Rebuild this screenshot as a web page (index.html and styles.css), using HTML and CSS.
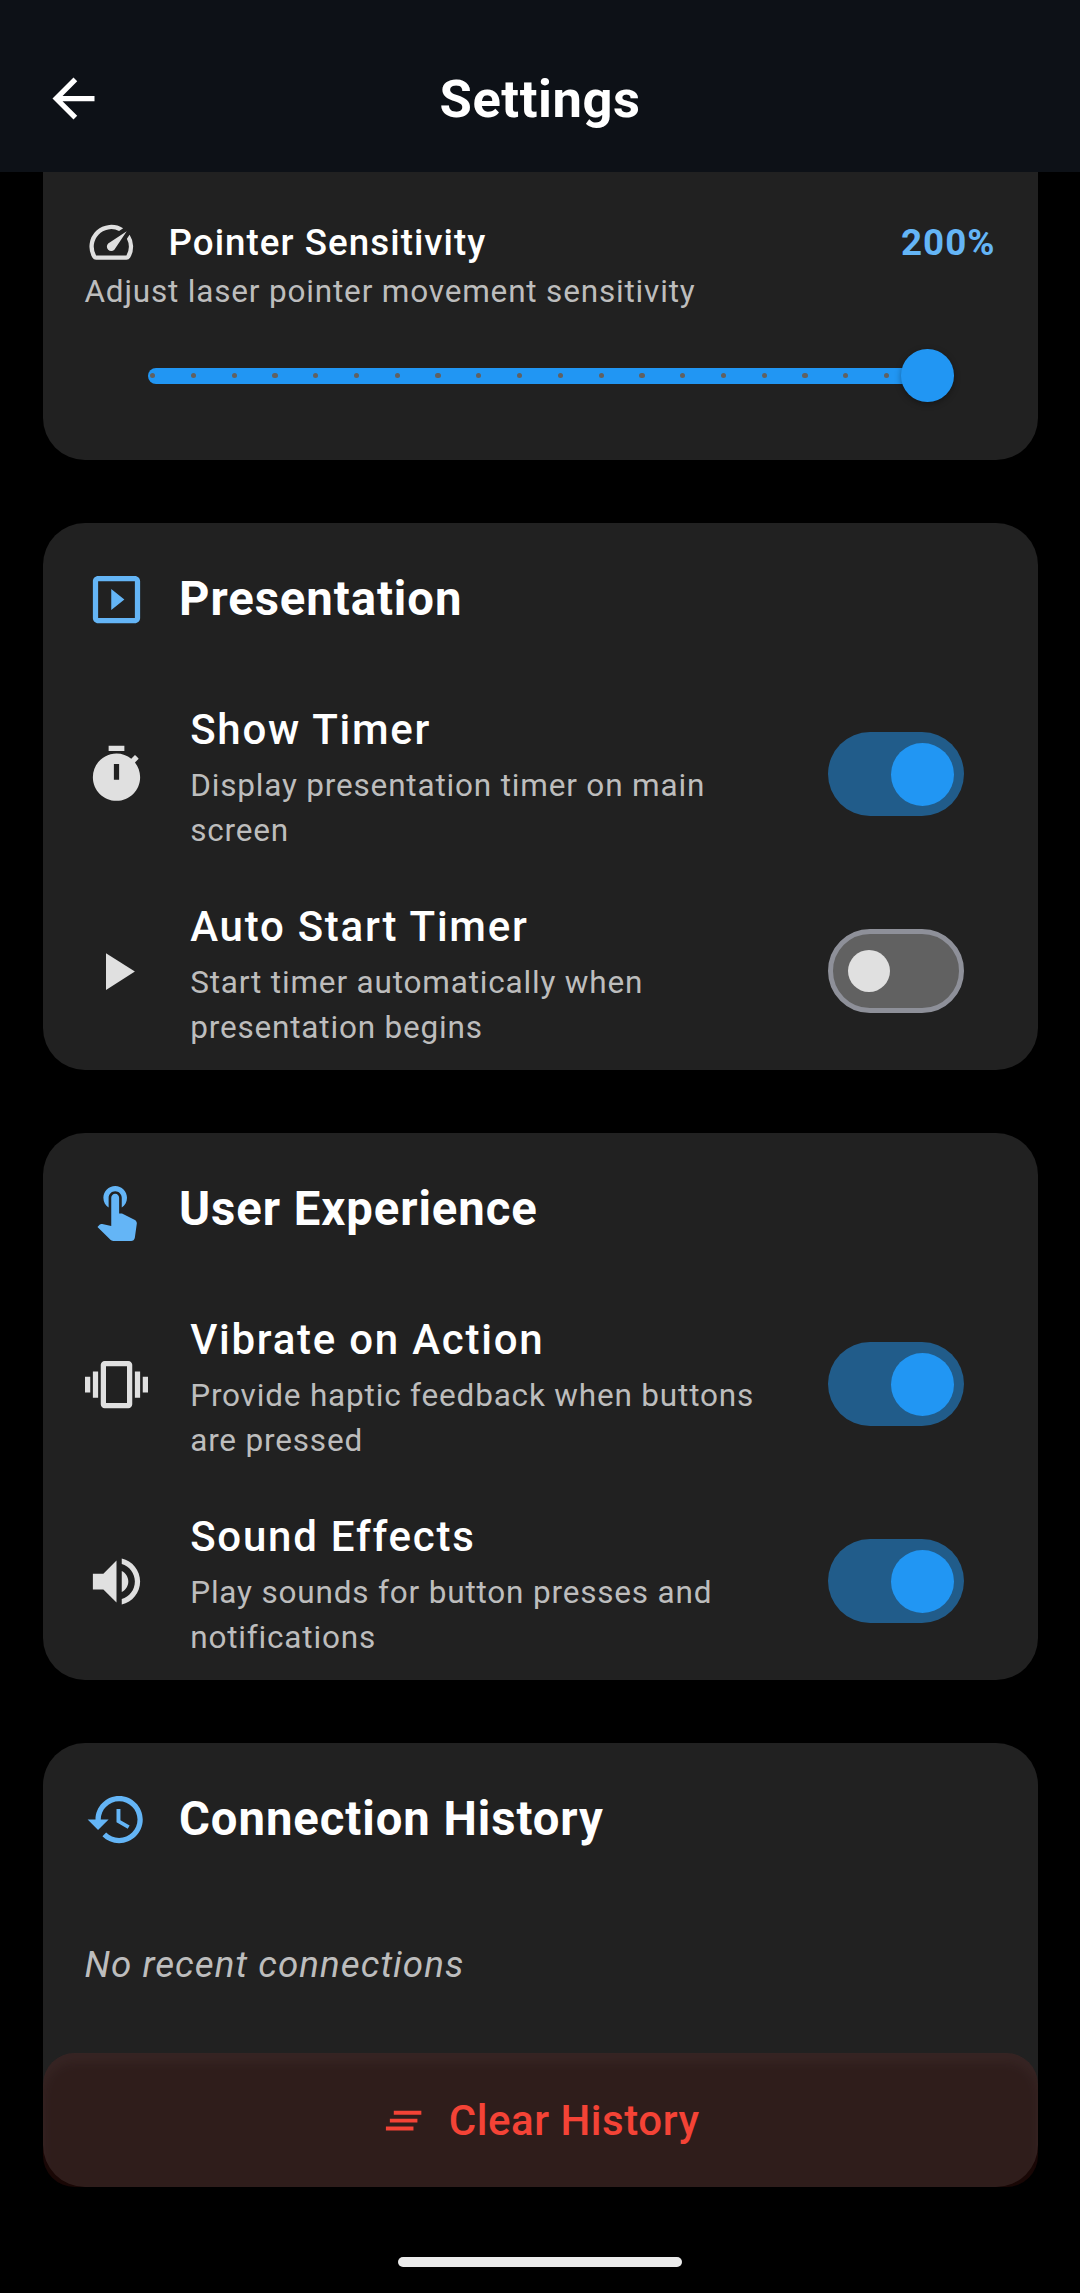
FILE: index.html
```html
<!DOCTYPE html>
<html lang="en">
<head>
<meta charset="utf-8">
<title>Settings</title>
<link rel="stylesheet" href="styles.css">
</head>
<body>
<header class="app-bar">
  <svg class="icon back" viewBox="0 0 24 24"><path d="M20 11H7.83l5.59-5.59L12 4l-8 8 8 8 1.41-1.41L7.83 13H20v-2z"/></svg>
  <h1 class="app-title">Settings</h1>
</header>

<main class="content">
  <section class="card card-pointer">
    <div class="setting-row">
      <svg class="icon icon-small" viewBox="0 0 24 24"><path d="M20.38 8.57l-1.23 1.85a8 8 0 0 1-.22 7.58H5.07A8 8 0 0 1 15.58 6.85l1.85-1.23A10 10 0 0 0 3.35 19a2 2 0 0 0 1.72 1h13.85a2 2 0 0 0 1.74-1 10 10 0 0 0-.27-10.44zm-9.79 6.84a2 2 0 0 0 2.83 0l5.66-8.49-8.49 5.66a2 2 0 0 0 0 2.83z"/></svg>
      <span class="setting-name">Pointer Sensitivity</span>
      <span class="setting-value">200%</span>
    </div>
    <p class="subtitle">Adjust laser pointer movement sensitivity</p>
    <div class="slider">
      <div class="ticks"><i></i><i></i><i></i><i></i><i></i><i></i><i></i><i></i><i></i><i></i><i></i><i></i><i></i><i></i><i></i><i></i><i></i><i></i><i></i><i></i></div>
      <div class="slider-thumb"></div>
    </div>
  </section>

  <section class="card">
    <div class="card-header">
      <svg class="icon accent" viewBox="0 0 24 24"><path d="M10 8v8l5-4-5-4zm9-5H5c-1.1 0-2 .9-2 2v14c0 1.1.9 2 2 2h14c1.1 0 2-.9 2-2V5c0-1.1-.9-2-2-2zm0 16H5V5h14v14z"/></svg>
      <h2>Presentation</h2>
    </div>
    <div class="tile">
      <svg class="icon" viewBox="0 0 24 24"><path d="M15 1H9v2h6V1zm4.03 6.39l1.42-1.42c-.43-.51-.9-.99-1.41-1.41l-1.42 1.42C16.07 4.74 14.12 4 12 4c-4.97 0-9 4.03-9 9s4.02 9 9 9 9-4.03 9-9c0-2.12-.74-4.07-1.97-5.61zM13 14h-2V8h2v6z"/></svg>
      <div class="tile-text">
        <h3>Show Timer</h3>
        <p class="subtitle">Display presentation timer on main screen</p>
      </div>
      <div class="switch on"><span></span></div>
    </div>
    <div class="tile">
      <svg class="icon" viewBox="0 0 24 24"><path d="M8 5v14l11-7z"/></svg>
      <div class="tile-text">
        <h3>Auto Start Timer</h3>
        <p class="subtitle">Start timer automatically when presentation begins</p>
      </div>
      <div class="switch"><span></span></div>
    </div>
  </section>

  <section class="card">
    <div class="card-header">
      <svg class="icon accent" viewBox="0 0 24 24"><path d="M9 11.24V7.5C9 6.12 10.12 5 11.5 5S14 6.12 14 7.5v3.74c1.21-.81 2-2.18 2-3.74C16 5.01 13.99 3 11.5 3S7 5.01 7 7.5c0 1.56.79 2.93 2 3.74zm9.84 4.63l-4.54-2.26c-.17-.07-.35-.11-.54-.11H13v-6c0-.83-.67-1.5-1.5-1.5S10 6.67 10 7.5v10.74l-3.43-.72c-.08-.01-.15-.03-.24-.03-.31 0-.59.13-.79.33l-.79.8 4.94 4.94c.27.27.65.44 1.06.44h6.79c.75 0 1.33-.55 1.44-1.28l.75-5.27c.01-.07.02-.14.02-.2 0-.62-.38-1.16-.91-1.38z"/></svg>
      <h2>User Experience</h2>
    </div>
    <div class="tile">
      <svg class="icon" viewBox="0 0 24 24"><path d="M0 15h2V9H0v6zm3 2h2V7H3v10zm19-8v6h2V9h-2zm-3 8h2V7h-2v10zM16.5 3h-9C6.67 3 6 3.67 6 4.5v15c0 .83.67 1.5 1.5 1.5h9c.83 0 1.5-.67 1.5-1.5v-15c0-.83-.67-1.5-1.5-1.5zM16 19H8V5h8v14z"/></svg>
      <div class="tile-text">
        <h3>Vibrate on Action</h3>
        <p class="subtitle">Provide haptic feedback when buttons are pressed</p>
      </div>
      <div class="switch on"><span></span></div>
    </div>
    <div class="tile">
      <svg class="icon" viewBox="0 0 24 24"><path d="M3 9v6h4l5 5V4L7 9H3zm13.5 3c0-1.77-1.02-3.29-2.5-4.03v8.05c1.48-.73 2.5-2.25 2.5-4.02zM14 3.23v2.06c2.89.86 5 3.54 5 6.71s-2.11 5.85-5 6.71v2.06c4.01-.91 7-4.49 7-8.77s-2.99-7.86-7-8.77z"/></svg>
      <div class="tile-text">
        <h3>Sound Effects</h3>
        <p class="subtitle">Play sounds for button presses and notifications</p>
      </div>
      <div class="switch on"><span></span></div>
    </div>
  </section>

  <section class="card card-history">
    <div class="card-header">
      <svg class="icon accent" viewBox="0 0 24 24"><path d="M13 3c-4.97 0-9 4.03-9 9H1l3.89 3.89.07.14L9 12H6c0-3.87 3.13-7 7-7s7 3.13 7 7-3.13 7-7 7c-1.93 0-3.68-.79-4.94-2.06l-1.42 1.42C8.27 19.99 10.51 21 13 21c4.97 0 9-4.03 9-9s-4.03-9-9-9zm-1 5v5l4.28 2.54.72-1.21-3.5-2.08V8H12z"/></svg>
      <h2>Connection History</h2>
    </div>
    <p class="empty">No recent connections</p>
    <button class="clear-button" type="button">
      <svg class="clear-icon" viewBox="0 0 24 24"><path d="M5 13h14v-2H5v2zm-2 4h14v-2H3v2zM7 7v2h14V7H7z"/></svg>
      <span>Clear History</span>
    </button>
  </section>
</main>

<div class="nav-bar"><div class="nav-pill"></div></div>
</body>
</html>
```
FILE: styles.css
```css
* { box-sizing: border-box; }

body {
  margin: 0;
  width: 1080px;
  height: 2293px;
  display: flex;
  flex-direction: column;
  overflow: hidden;
  background: #000;
  color: #fff;
  font-family: Roboto, "Liberation Sans", sans-serif;
  letter-spacing: 0.82px;
}

h1, h2, h3, p { margin: 0; }

.icon {
  width: 63px;
  height: 63px;
  flex: none;
  fill: #e0e0e0;
}
.icon-small { width: 52.5px; height: 52.5px; }
.accent { fill: #64b5f6; }

.app-bar {
  flex: none;
  height: 172px;
  padding: 24px 42px 0;
  display: grid;
  grid-template-columns: 63px 1fr 63px;
  align-items: center;
  background: #0d1117;
}
.back { fill: #fff; }
.app-title {
  padding-top: 1px;
  font-size: 52.5px;
  font-weight: 700;
  line-height: 68px;
  letter-spacing: 0.55px;
  text-align: center;
}

.content {
  display: flex;
  flex-direction: column;
  gap: 63.4px;
  padding: 0 42.5px;
}

.card {
  padding-top: 42px;
  border-radius: 42px;
  background: #212121;
}

.card-pointer {
  height: 287.6px;
  padding: 44px 42px 0;
  border-radius: 0 0 42px 42px;
}
.setting-row {
  display: flex;
  align-items: center;
  height: 52.5px;
  font-size: 36.75px;
  letter-spacing: 1.04px;
}
.setting-name { margin-left: 31.5px; font-weight: 500; }
.setting-value { margin-left: auto; font-weight: 700; color: #64b5f6; }

.subtitle {
  font-size: 31.5px;
  line-height: 45px;
  color: #bdbdbd;
}

.slider {
  position: relative;
  width: 785px;
  height: 15.75px;
  margin: 54.3px 63px 0;
  padding: 0 2.6px;
  border-radius: 8px;
  background: #2196f3;
}
.ticks {
  display: flex;
  justify-content: space-between;
  align-items: center;
  height: 100%;
}
.ticks i {
  width: 5.25px;
  height: 5.25px;
  border-radius: 50%;
  background: #616161;
}
.slider-thumb {
  position: absolute;
  right: -21px;
  top: -18.4px;
  width: 52.5px;
  height: 52.5px;
  border-radius: 50%;
  background: #2196f3;
  box-shadow: 0 2px 6px rgba(0, 0, 0, 0.35);
}

.card-header {
  display: flex;
  align-items: center;
  gap: 31.5px;
  height: 68.6px;
  margin: 0 42px 42px;
}
.card-header h2 {
  font-size: 47.25px;
  line-height: 67px;
  font-weight: 700;
  letter-spacing: 0.94px;
}

.tile {
  display: flex;
  align-items: center;
  height: 197px;
  padding: 0 73.5px 0 42px;
}
.tile-text {
  flex: 1;
  align-self: flex-start;
  padding-top: 22px;
  margin: 0 36px 0 42.7px;
}
.tile-text h3 {
  font-size: 42px;
  line-height: 63px;
  font-weight: 500;
  letter-spacing: 1.75px;
  margin-bottom: 2px;
}

.switch {
  display: flex;
  align-items: center;
  flex: none;
  width: 136.5px;
  height: 84px;
  padding-left: 15.75px;
  border: 5.25px solid #8e9099;
  border-radius: 42px;
  background: #616161;
}
.switch span {
  width: 42px;
  height: 42px;
  border-radius: 50%;
  background: #e0e0e0;
}
.switch.on {
  justify-content: flex-end;
  padding: 0 10.5px 0 0;
  border: 0;
  background: #215c8a;
}
.switch.on span { width: 63px; height: 63px; background: #2196f3; }

.empty {
  margin: 0 42px;
  padding-top: 43.5px;
  font-size: 36.75px;
  line-height: 52.5px;
  font-style: italic;
  letter-spacing: 1.04px;
  color: #bdbdbd;
}
.card-history { height: 444.5px; }

.clear-button {
  position: relative;
  display: flex;
  align-items: center;
  justify-content: center;
  gap: 21px;
  width: 100%;
  height: 134.5px;
  margin-top: 61.4px;
  padding: 0;
  border: 0;
  border-radius: 31.5px;
  overflow: hidden;
  background: rgba(244, 67, 54, 0.1);
  color: #f44336;
  font-family: inherit;
  font-size: 42px;
  font-weight: 500;
  letter-spacing: 0.54px;
}
/* Soft elevation shade showing through the translucent button. */
.clear-button::before {
  content: "";
  position: absolute;
  inset: 10px 1px -24px;
  border-radius: 31.5px;
  background: rgba(24, 7, 5, 0.24);
  filter: blur(4px);
}
.clear-button > * { position: relative; }
.clear-icon { width: 47.25px; height: 47.25px; fill: #f44336; }

.nav-bar {
  display: flex;
  justify-content: center;
  margin-top: auto;
  padding-bottom: 26px;
}
.nav-pill { width: 284px; height: 10px; border-radius: 5px; background: #ebebeb; }
```
